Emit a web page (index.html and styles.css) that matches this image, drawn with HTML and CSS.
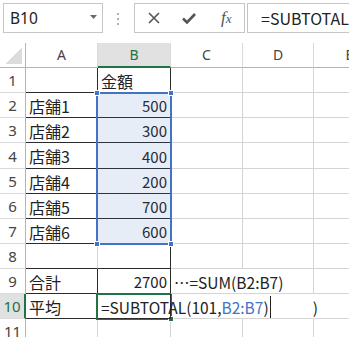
FILE: index.html
```html
<!DOCTYPE html>
<html lang="ja">
<head>
  <meta charset="UTF-8" />
  <title>SUBTOTAL</title>
  <link rel="stylesheet" href="styles.css">
</head>
<body>
  <div class="toolbar">
    <div class="namebox">
      <span>B10</span>
      <svg class="arrow" width="7" height="4" viewBox="0 0 7 4"><path d="M0 0h7L3.5 4z" fill="#6a6a6a"/></svg>
    </div>
    <svg class="dots" width="3" height="12" viewBox="0 0 3 12">
      <rect x="0" y="0" width="2" height="2" fill="#b0b0b0"/>
      <rect x="0" y="5" width="2" height="2" fill="#b0b0b0"/>
      <rect x="0" y="10" width="2" height="2" fill="#b0b0b0"/>
    </svg>
    <div class="fxbtns">
      <svg width="12" height="12" viewBox="0 0 12 12"><path d="M1 1l10 10M11 1L1 11" stroke="#555" stroke-width="1.6"/></svg>
      <svg width="14" height="12" viewBox="0 0 14 12"><path d="M1 6.5l4 4L13 2" stroke="#555" stroke-width="2.6" fill="none"/></svg>
      <span class="fx">f<span class="fx-x">x</span></span>
    </div>
    <div class="formula">=SUBTOTAL(101,B2:B7)</div>
  </div>

  <div class="sheet">
    <div class="cells">
      <!-- header -->
      <div class="corner"></div>
      <div class="ch">A</div>
      <div class="ch ch-on">B</div>
      <div class="ch">C</div>
      <div class="ch">D</div>
      <div class="ch">E</div>

      <div class="rh">1</div>
      <div class="c br bb"></div>
      <div class="c br bb jp">金額</div>
      <div class="c"></div><div class="c"></div><div class="c"></div>

      <div class="rh">2</div>
      <div class="c br bb jp">店舗1</div>
      <div class="c br bb num">500</div>
      <div class="c"></div><div class="c"></div><div class="c"></div>

      <div class="rh">3</div>
      <div class="c br bb jp">店舗2</div>
      <div class="c br bb num">300</div>
      <div class="c"></div><div class="c"></div><div class="c"></div>

      <div class="rh">4</div>
      <div class="c br bb jp">店舗3</div>
      <div class="c br bb num">400</div>
      <div class="c"></div><div class="c"></div><div class="c"></div>

      <div class="rh">5</div>
      <div class="c br bb jp">店舗4</div>
      <div class="c br bb num">200</div>
      <div class="c"></div><div class="c"></div><div class="c"></div>

      <div class="rh">6</div>
      <div class="c br bb jp">店舗5</div>
      <div class="c br bb num">700</div>
      <div class="c"></div><div class="c"></div><div class="c"></div>

      <div class="rh">7</div>
      <div class="c br bb jp">店舗6</div>
      <div class="c br bb num">600</div>
      <div class="c"></div><div class="c"></div><div class="c"></div>

      <div class="rh">8</div>
      <div class="c bb"></div>
      <div class="c bb br"></div>
      <div class="c"></div><div class="c"></div><div class="c"></div>

      <div class="rh">9</div>
      <div class="c br bb jp">合計</div>
      <div class="c br bb num">2700</div>
      <div class="c nr spill">…=SUM(B2:B7)</div>
      <div class="c"></div><div class="c"></div>

      <div class="rh rh-on">10</div>
      <div class="c br bb jp">平均</div>
      <div class="c br bb spill"><span>=SUBTOTAL(101,<span class="ref">B2:B7</span>)</span><span class="caret"></span><span class="paren">)</span></div>
      <div class="c nr"></div><div class="c nr"></div><div class="c"></div>

      <div class="rh">11</div>
      <div class="c"></div><div class="c"></div><div class="c"></div><div class="c"></div><div class="c"></div>
    </div>

    <div class="marks">
      <div class="sel">
        <i class="h tl"></i><i class="h tr"></i><i class="h bl"></i><i class="h brc"></i>
      </div>
      <div class="active"><i class="h2"></i></div>
    </div>
  </div>
</body>
</html>
```

FILE: styles.css
```css
* {
  box-sizing: border-box;
  margin: 0;
  padding: 0;
}

body {
  width: 349px;
  height: 337px;
  overflow: hidden;
  background: #fff;
  color: #222;
  font-family: 'Noto Sans CJK JP', 'Noto Sans', sans-serif;
}

.toolbar {
  height: 43px;
  display: flex;
  align-items: flex-start;
  padding: 3px 0 0 3px;
  white-space: nowrap;
}

.toolbar > * {
  flex-shrink: 0;
}

.namebox {
  width: 100px;
  height: 30px;
  border: 1px solid #c6c6c6;
  display: flex;
  align-items: center;
  justify-content: space-between;
  padding: 0 5px 0 6px;
  font-family: 'Noto Sans', sans-serif;
  font-size: 15.5px;
}

.namebox .arrow {
  margin-top: -2px;
}

.dots {
  margin: 10px 0 0 14px;
}

.fxbtns {
  margin-left: 14px;
  width: 111px;
  height: 30px;
  border: 1px solid #c6c6c6;
  display: flex;
  align-items: center;
  padding-left: 13px;
  gap: 22px;
}

.fx {
  font-family: 'Liberation Serif', serif;
  font-style: italic;
  font-size: 17px;
  color: #555;
  margin-left: 3px;
}

.fx-x {
  font-size: 13px;
}

.formula {
  margin-left: 2px;
  height: 30px;
  width: 200px;
  border: 1px solid #c6c6c6;
  padding-left: 13px;
  line-height: 28px;
  font-size: 16px;
  overflow: hidden;
}

.sheet {
  display: grid;
}

.cells,
.marks {
  grid-area: 1 / 1;
  display: grid;
  grid-template-columns: 26px 72px 73px 72px 71px 72px;
  grid-template-rows: 25px 25px 25px 25px 26px 25px 25px 25px 25px 25px 25px 25px;
}

.cells {
  font-size: 15.5px;
}

.marks {
  pointer-events: none;
}

.corner {
  border-right: 1px solid #b4b4b4;
  border-bottom: 1px solid #b4b4b4;
  background: linear-gradient(to top left, #dcdcdc 50%, transparent 50%) no-repeat right 3px bottom 3px / 17px 16px;
}

.ch {
  border-right: 1px solid #dadada;
  border-bottom: 1px solid #b4b4b4;
  text-align: center;
  line-height: 24px;
  font-family: 'Noto Sans', sans-serif;
  font-size: 14px;
  color: #444;
}

.ch-on {
  background: #e1e1e1;
  color: #217346;
  border-bottom: 2px solid #217346;
}

.rh {
  border-right: 1px solid #b4b4b4;
  border-bottom: 1px solid #dadada;
  display: flex;
  align-items: center;
  justify-content: center;
  font-family: 'Noto Sans', sans-serif;
  font-size: 15px;
  color: #444;
}

.rh-on {
  background: #e1e1e1;
  color: #217346;
  border-right: 2px solid #217346;
}

.c {
  border-right: 1px solid #d4d4d4;
  border-bottom: 1px solid #d4d4d4;
  display: flex;
  align-items: center;
  padding: 1px 3px 0;
  white-space: nowrap;
}

.c.br { border-right-color: #2b2b2b; }
.c.bb { border-bottom-color: #2b2b2b; }
.c.nr { border-right-color: transparent; }

.jp {
  font-size: 16px;
}

.num {
  justify-content: flex-end;
  font-size: 15px;
}

.spill {
  position: relative;
  z-index: 2;
  overflow: visible;
}

.ref {
  color: #4472c4;
}

.caret {
  flex-shrink: 0;
  width: 1px;
  height: 22px;
  background: #222;
  margin-left: 1px;
}

.paren {
  margin-left: 42px;
}

.sel {
  grid-column: 3;
  grid-row: 3 / 9;
  margin: -1px -1px -1px -2px;
  border: 2px solid #4472c4;
  background: rgba(68, 114, 196, 0.13);
  position: relative;
}

.h {
  position: absolute;
  width: 6px;
  height: 6px;
  background: #4472c4;
  border: 1px solid #fff;
}

.tl { left: -4px; top: -4px; }
.tr { right: -4px; top: -4px; }
.bl { left: -4px; bottom: -4px; }
.brc { right: -4px; bottom: -4px; }

.active {
  grid-column: 3;
  grid-row: 11;
  margin: -1px -1px -1px -2px;
  border: 2px solid #217346;
  position: relative;
}

.h2 {
  position: absolute;
  right: -4px;
  bottom: -4px;
  width: 6px;
  height: 6px;
  background: #217346;
  border: 1px solid #fff;
}
```
